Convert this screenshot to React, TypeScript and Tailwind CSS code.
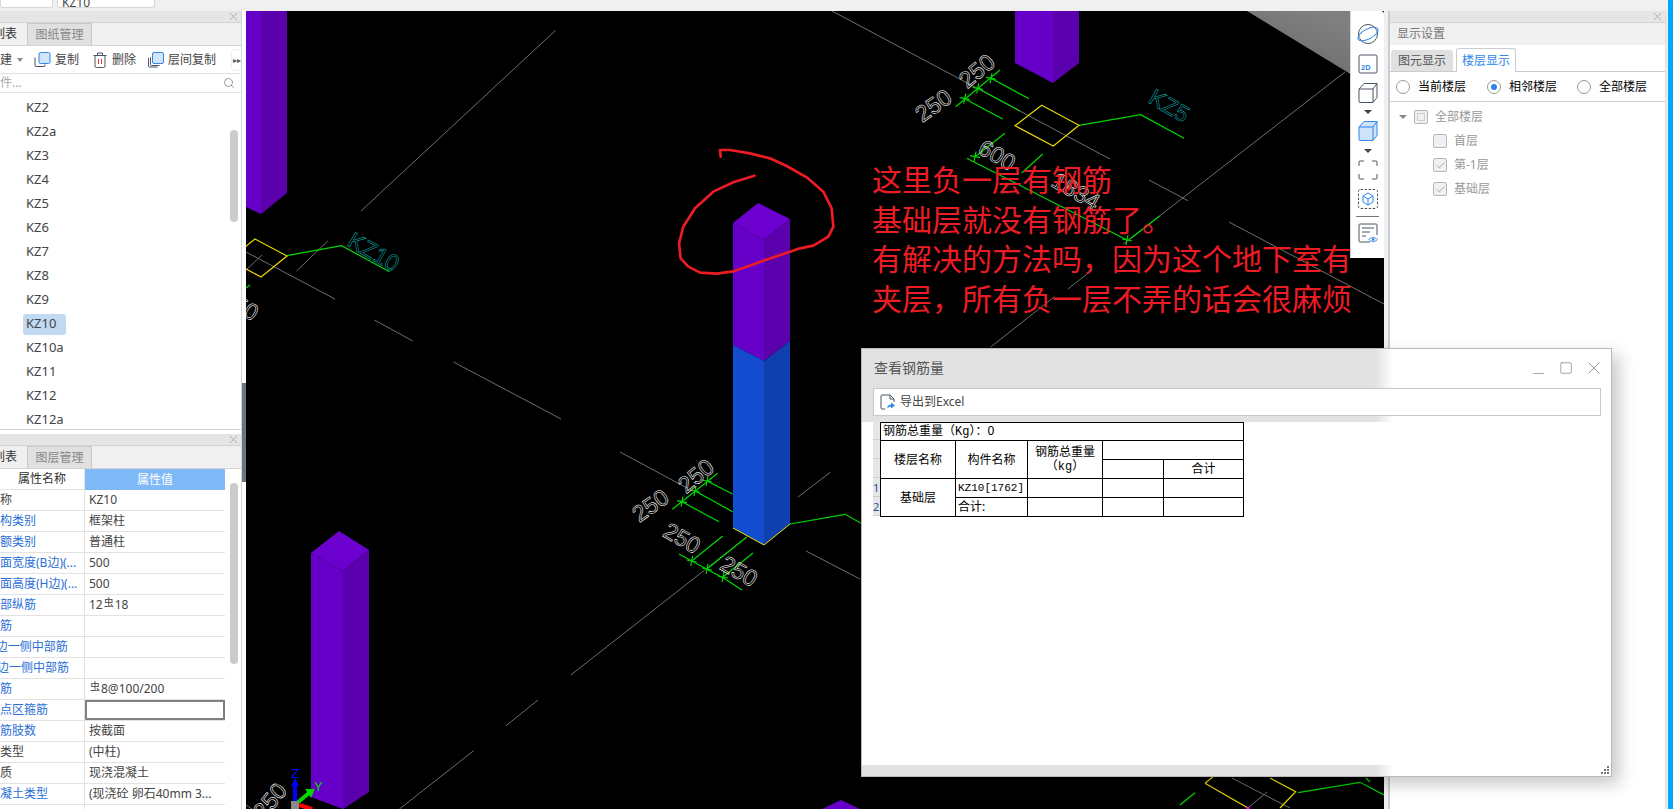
import React from "react";
import { Check, Search, X, Minus, Square } from "lucide-react";

const names = ["KZ2","KZ2a","KZ3","KZ4","KZ5","KZ6","KZ7","KZ8","KZ9","KZ10","KZ10a","KZ11","KZ12","KZ12a"];

const props: [string, React.ReactNode, boolean][] = [
  ["名称", "KZ10", false],
  ["结构类别", "框架柱", true],
  ["定额类别", "普通柱", true],
  ["截面宽度(B边)(...", "500", true],
  ["截面高度(H边)(...", "500", true],
  ["全部纵筋", <>12<Rebar />18</>, true],
  ["角筋", "", true],
  ["B边一侧中部筋", "", true],
  ["H边一侧中部筋", "", true],
  ["箍筋", <><Rebar />8@100/200</>, true],
  ["节点区箍筋", "", true],
  ["箍筋肢数", "按截面", true],
  ["柱类型", "(中柱)", false],
  ["材质", "现浇混凝土", false],
  ["混凝土类型", "(现浇砼 卵石40mm 3...", true],
  ["", "", false],
];

function Rebar() {
  return <span className="relative -top-[3px] mx-[1px] text-[10px]">虫</span>;
}

function PanelStrip() {
  return (
    <div className="flex h-[12px] shrink-0 items-center justify-end border-b border-[#d4d4d4] bg-[#e5e5e5] pr-[1px]">
      <X size={13} strokeWidth={1.300} className="shrink-0 text-[#9a9a9a]" />
    </div>
  );
}

function Tabs({ first, second }: { first: string; second: string }) {
  return (
    <div className="flex h-[23px] shrink-0 border-b border-[#d4d4d4] bg-[#f0f0f0] text-[12px]">
      <div className="flex w-[27px] items-center overflow-hidden bg-[#f0f0f0] text-[#333]">
        <span className="-ml-[7px] whitespace-nowrap">{first}</span>
      </div>
      <div className="flex w-[65px] items-center justify-center border border-b-0 border-[#c9c9c9] bg-[#e0e0e0] text-[#888]">{second}</div>
    </div>
  );
}

function CopyIcon({ layered }: { layered?: boolean }) {
  return (
    <svg width="17" height="16" viewBox="0 0 17 16" fill="none">
      {layered && <path d="M1.500 6v8a1 1 0 0 0 1 1h8" stroke="#4a5565" strokeWidth="1" />}
      <path d={layered ? "M3.500 5v7.500a1 1 0 0 0 1 1h8" : "M1 5.500v8a1 1 0 0 0 1 1h8a1 1 0 0 0 1-1v-1"} stroke="#4a5565" strokeWidth="1" />
      <rect x={layered ? 5.5 : 5} y="0.5" width="11" height="11" rx="1.500" fill="#d3e5fb" stroke="#2f87e8" />
    </svg>
  );
}

function TrashIcon() {
  return (
    <svg width="14" height="16" viewBox="0 0 14 16" fill="none" stroke="#4a5565">
      <path d="M0.500 3.500h13M4.500 3.500v-2.500h5v2.500M2 3.500v10.500a1.500 1.500 0 0 0 1.500 1.500h7a1.500 1.500 0 0 0 1.500-1.500v-10.500" />
      <path d="M5.500 7v5M8.500 7v5" stroke="#e53935" />
    </svg>
  );
}

function Radio({ on, label, w }: { on?: boolean; label: string; w: string }) {
  return (
    <div className={`flex items-center ${w}`}>
      <span className="flex h-[14px] w-[14px] items-center justify-center rounded-full border border-[#999] bg-white">
        {on && <span className="h-[6px] w-[6px] rounded-full bg-[#2f7fe8]" />}
      </span>
      <span className="ml-[8px] text-black">{label}</span>
    </div>
  );
}

function Box({ checked, partial }: { checked?: boolean; partial?: boolean }) {
  return (
    <span className="flex h-[14px] w-[14px] items-center justify-center rounded-[2px] border border-[#b5b5b5] bg-[#f0f0f0]">
      {checked && <Check size={11} strokeWidth={2} className="text-[#a8a8a8]" />}
      {partial && <span className="h-[8px] w-[8px] border border-[#cfcfcf]" />}
    </span>
  );
}

function LeftPanel() {
  return (
    <div className="relative flex w-[246px] shrink-0 bg-white">
      <div className="flex w-[242px] flex-col border-r border-[#d4d4d4]">
        <PanelStrip />
        <Tabs first="列表" second="图纸管理" />
        <div className="flex h-[28px] shrink-0 items-center overflow-hidden whitespace-nowrap border-b border-[#e2e2e2] text-[12px] text-[#444]">
          <div className="flex w-[12px] shrink-0 justify-end overflow-hidden">建</div>
          <span className="ml-[5px] h-0 w-0 shrink-0 border-x-[3px] border-t-[4px] border-x-transparent border-t-[#888]" />
          <span className="ml-[11px] shrink-0"><CopyIcon /></span>
          <span className="ml-[4px] shrink-0">复制</span>
          <span className="ml-[14px] shrink-0"><TrashIcon /></span>
          <span className="ml-[5px] shrink-0">删除</span>
          <span className="ml-[11px] shrink-0"><CopyIcon layered /></span>
          <span className="ml-[4px] shrink-0">层间复制</span>
          <span className="ml-[15px] flex h-[22px] w-[11px] shrink-0 items-center justify-center rounded-[3px] border border-[#eee] text-[8px] text-[#555]">▸▸</span>
        </div>
        <div className="flex h-[19px] shrink-0 items-center justify-between border-b border-[#e2e2e2] pr-[6px] text-[12px] text-[#aaa]">
          <span>件...</span>
          <Search size={12} className="text-[#999]" />
        </div>
        <div className="relative h-[337px] shrink-0 overflow-hidden border-b border-[#d4d4d4] pt-[3px] text-[13px] text-[#444]">
          {names.map((n) => (
            <div key={n} className="flex h-[24px] items-center pl-[23px]">
              <span className={`flex h-[21px] items-center px-[3px] ${n === "KZ10" ? "w-[43px] rounded-[3px] bg-[#c2d9f2]" : ""}`}>{n}</span>
            </div>
          ))}
          <div className="absolute left-[230px] top-[37px] h-[92px] w-[8px] rounded-[4px] bg-[#cbcbcb]" />
        </div>
        <div className="h-[4px] shrink-0" />
        <PanelStrip />
        <Tabs first="列表" second="图层管理" />
        <div className="relative flex-1 overflow-hidden text-[12px]">
          <div className="flex h-[21px] w-[225px]">
            <div className="flex w-[85px] items-center justify-center border-b border-r border-[#e2e2e2] text-[#333]">属性名称</div>
            <div className="flex w-[140px] items-center justify-center bg-[#7fb9f8] text-white">属性值</div>
          </div>
          {props.map(([label, value, blue], i) => (
            <div key={i} className="flex h-[21px] w-[225px] border-b border-[#e2e2e2]">
              <div className="flex w-[85px] items-center overflow-hidden border-r border-[#e2e2e2]">
                <span className={`-ml-[12px] whitespace-nowrap ${blue ? "text-[#2a6fd6]" : "text-[#444]"}`}>{label}</span>
              </div>
              {label === "节点区箍筋" ? (
                <div className="w-[140px] border-2 border-[#808080]" />
              ) : (
                <div className="flex w-[140px] items-center whitespace-nowrap pl-[4px] text-[#444]">{value}</div>
              )}
            </div>
          ))}
          <div className="absolute left-[230px] top-[14px] h-[181px] w-[8px] rounded-[4px] bg-[#cbcbcb]" />
        </div>
      </div>
      <div className="absolute left-[242px] top-[372px] h-[99px] w-[4px] bg-[#6c7480]" />
    </div>
  );
}

const purple = { top: "#6b00cf", left: "#6600c8", right: "#5b00ad" };
const gray = "#6e6e6e";
const green = "#00d800";

function Dim({ x, y, r, t }: { x: number; y: number; r: number; t: string }) {
  return (
    <text
      transform={`translate(${x} ${y}) rotate(${r})`}
      fill="none"
      stroke="#ffffff"
      strokeWidth="0.550"
      fontFamily="Liberation Sans, sans-serif"
      fontSize="23"
      textAnchor="middle"
    >
      {t}
    </text>
  );
}

function Tick({ x, y }: { x: number; y: number }) {
  return <path d={`M${x - 5} ${y - 1}L${x + 5} ${y + 1}M${x + 1} ${y - 5}L${x - 1} ${y + 5}`} stroke={green} strokeWidth="1.200" />;
}

function Label({ x, y, t }: { x: number; y: number; t: string }) {
  return (
    <text transform={`translate(${x} ${y}) rotate(30)`} fontSize="23" fontFamily="Liberation Sans, sans-serif" fill="none" stroke="#0a9a9a" strokeWidth="0.600">{t}</text>
  );
}

function Scene() {
  const grayLines = [
    "M555.500 30.400L361 211", "M327.800 241L296.500 271",
    "M246 252L335 299", "M374.400 320L412.800 341", "M453.500 362L561 419", "M620 452L687 488", "M806 551L860 579",
    "M262 255L246 270", "M798 497L830.700 472", "M746.700 537L570.800 675", "M538 700L506 725.700", "M473.700 750.700L399.400 809",
    "M832 11L1110 159", "M1149 180L1188 200.700", "M1229 222L1384 304",
    "M1345 72L1123.400 244", "M1092 270L1068 289", "M1054.500 296.700L990.700 347",
    "M1231.700 778L1290 808", "M1267 792L1248 808", "M246 805L252 809",
  ];
  const greenLines = [
    "M286.700 255.700L341.600 245.700L389.500 271.700", "M250 285L246 288",
    "M717.700 473.300L672.300 509.300", "M707 481L732.700 494", "M695 491L732.700 511.700", "M682 501.700L719 521.700",
    "M679 554L726.700 580", "M691.700 561L722.700 536", "M707 569L746.700 537", "M723 577L753 553", "M726.700 580L742 590",
    "M790 524L845 514.300L860.700 523",
    "M1000 70L955.700 106.700", "M991 78.300L1029 98.700", "M977.700 88.300L1020 111", "M964.700 98.700L1002.700 119",
    "M1079 125.300L1140.700 114.700L1184 138.300",
    "M966.700 158.300L1127 240", "M1005 133.300L975 156.700", "M1042.700 154L1021.700 173", "M1159.700 216L1128.600 240",
    "M1298 792.700L1360 782.300L1384 795", "M1195 792.700L1180 805", "M1366 778L1370 782",
  ];
  const ticks = [[707,481],[695,491],[682,501.7],[691.7,561],[707,569],[723,577],[991,78.3],[977.7,88.3],[964.7,98.7],[975,156.7],[1127,240]];
  return (
    <svg className="absolute inset-0 h-full w-full" viewBox="246 11 1138 798" fill="none">
      <defs>
        <linearGradient id="corner" x1="0" y1="1" x2="0.600" y2="0">
          <stop offset="0" stopColor="#666" />
          <stop offset="1" stopColor="#808080" />
        </linearGradient>
      </defs>
      <polygon points="1247,11 1352,75 1352,11" fill="url(#corner)" />
      {grayLines.map((d) => <path key={d} d={d} stroke={gray} strokeWidth="1" />)}
      {greenLines.map((d) => <path key={d} d={d} stroke={green} strokeWidth="1.200" />)}
      {ticks.map(([x, y]) => <Tick key={`${x}-${y}`} x={x} y={y} />)}

      <path d="M255 239L287 256L261 277L229 260Z M1041.700 105.300L1079 125.300L1053.300 146L1015 125.700Z" stroke="#e6d800" strokeWidth="1.200" />
      <path d="M1205 783.300L1212.700 777M1270 778L1295.700 791.700L1280 808M1205 783.300L1248 808" stroke="#e6d800" strokeWidth="1.200" />
      <circle cx="1248" cy="808" r="1.500" fill="#ff00ff" />

      <polygon points="246,11 261,11 261,214 246,207" fill={purple.left} />
      <polygon points="261,11 287,11 287,193 261,214" fill={purple.right} />
      <polygon points="1015,11 1053,11 1053,83 1015,63" fill={purple.left} />
      <polygon points="1053,11 1079,11 1079,63 1053,83" fill={purple.right} />
      <polygon points="733,223 758,203 790,219 764,240" fill={purple.top} />
      <polygon points="733,223 764,240 764,361 733,345" fill={purple.left} />
      <polygon points="764,240 790,219 790,341 764,361" fill={purple.right} />
      <polygon points="733,345 764,361 764,545 733,528" fill="#134cce" />
      <polygon points="764,361 790,341 790,524 764,545" fill="#1040b0" />
      <path d="M733 528L764 545L790 524" stroke="#f0e000" strokeWidth="1" />
      <polygon points="311,553 339,531 369,550 343,571" fill={purple.top} />
      <polygon points="311,553 343,571 343,809 311,797" fill={purple.left} />
      <polygon points="343,571 369,550 369,792 343,809" fill={purple.right} />
      <polygon points="841,800 860,809 822,809" fill={purple.left} />

      <Dim x={701} y={482} r={-40} t="250" />
      <Dim x={655} y={512} r={-35} t="250" />
      <Dim x={678} y={545} r={30} t="250" />
      <Dim x={735} y={578} r={30} t="250" />
      <Dim x={982} y={77} r={-40} t="250" />
      <Dim x={938} y={112} r={-35} t="250" />
      <Dim x={993} y={162} r={30} t="600" />
      <Dim x={1072} y={198} r={30} t="1834" />
      <Dim x={236} y={312} r={30} t="250" />
      <Dim x={276} y={806} r={-50} t="250" />

      <Label x={346} y={245} t="KZ10" />
      <Label x={1147} y={102} t="KZ5" />
      <Label x={862} y={530} t="KZ" />

      <g transform="translate(620 130) scale(0.33333)">
        <polyline
          points="302,80 300,60 330,60 390,70 450,85 500,108 560,142 610,185 635,235 640,290 625,320 580,347 540,355 490,372 430,392 380,410 340,424 290,431 240,428 205,410 182,385 177,340 190,290 225,235 280,185 340,157 403,137"
          stroke="#ed1c24"
          strokeWidth="8"
          strokeLinejoin="round"
          strokeLinecap="round"
        />
      </g>

      <path d="M295 805V784" stroke="#0000ff" strokeWidth="4" />
      <path d="M291 786L295 778L299 786Z" fill="#0000ff" />
      <path d="M297 803L309 793" stroke="#00d800" strokeWidth="4" />
      <path d="M305 789L315 789L311 798Z" fill="#00d800" />
      <path d="M299 805L312 809" stroke="#ff0000" strokeWidth="4" />
      <rect x="291" y="801" width="8" height="8" fill="#8a8a8a" />
      <text x="291" y="778" fontSize="13" fill="#0000ff" fontFamily="Liberation Sans, sans-serif">Z</text>
      <text x="314" y="791" fontSize="13" fill="#00d800" fontFamily="Liberation Sans, sans-serif">Y</text>
    </svg>
  );
}

function ToolRail() {
  const s = "#4a5565";
  const b = "#2f87e8";
  return (
    <div className="absolute right-0 top-0 flex h-[247px] w-[34px] flex-col items-center rounded-tr-[3px] border-l border-[#d8d8d8] bg-white pt-[12px]">
      <svg width="22" height="22" viewBox="0 0 22 22" fill="none">
        <circle cx="11" cy="11" r="9.500" stroke={s} />
        <ellipse cx="11" cy="11" rx="11" ry="5" transform="rotate(-28 11 11)" stroke={b} />
      </svg>
      <svg className="mt-[9px]" width="20" height="20" viewBox="0 0 20 20" fill="none">
        <rect x="1" y="1" width="18" height="18" rx="1.500" stroke={s} />
        <text x="3" y="16" fontSize="7.500" fontWeight="700" fill={b} fontFamily="Liberation Sans, sans-serif">2D</text>
      </svg>
      <svg className="mt-[8px]" width="20" height="22" viewBox="0 0 20 22" fill="none" stroke={s}>
        <path d="M1 7L6 1.500H19V15.500L15 20.500H2a1 1 0 0 1-1-1ZM1 7H15V20.500M15 7L19 1.500" />
      </svg>
      <span className="mt-[6px] h-0 w-0 border-x-[4px] border-t-[4px] border-x-transparent border-t-[#444]" />
      <svg className="mt-[6px]" width="20" height="22" viewBox="0 0 20 22" fill="none" stroke={b}>
        <path d="M1 7L6 1.500H19V15.500L15 20.500H2a1 1 0 0 1-1-1Z" fill="#cfe2fb" />
        <path d="M1 7H15V20.500M15 7L19 1.500" />
      </svg>
      <span className="mt-[7px] h-0 w-0 border-x-[4px] border-t-[4px] border-x-transparent border-t-[#444]" />
      <svg className="mt-[7px]" width="20" height="20" viewBox="0 0 20 20" fill="none" stroke={s}>
        <path d="M1 6V2a1 1 0 0 1 1-1H6M14 1H18a1 1 0 0 1 1 1V6M19 14V18a1 1 0 0 1-1 1H14M6 19H2a1 1 0 0 1-1-1V14" />
      </svg>
      <svg className="mt-[9px]" width="20" height="20" viewBox="0 0 20 20" fill="none">
        <rect x="0.500" y="0.500" width="19" height="19" rx="2" stroke={s} strokeDasharray="2.500 1.500" />
        <path d="M10 4L15 7V13L10 16L5 13V7ZM5 7L10 10L15 7M10 10V16" stroke={b} />
      </svg>
      <div className="mt-[7px] h-px w-[23px] bg-[#777]" />
      <svg className="mt-[6px]" width="20" height="20" viewBox="0 0 20 20" fill="none" stroke={s}>
        <path d="M12 19H2a1 1 0 0 1-1-1V2a1 1 0 0 1 1-1H18a1 1 0 0 1 1 1V12" />
        <path d="M4 5H16M4 9H12M4 13H8" />
        <path d="M11 16.500C12.500 14 17.500 14 19.500 16.500C17.500 19 12.500 19 11 16.500Z" stroke={b} fill="white" />
        <circle cx="15.200" cy="16.500" r="1.300" fill={b} stroke="none" />
      </svg>
    </div>
  );
}

function RightPanel() {
  return (
    <div className="flex w-[284px] shrink-0 bg-[#f0f0f0] pl-[4px]">
      <div className="flex w-[279px] flex-col border-x-2 border-x-[#c9cdd2] border-r-[#e4e4e4] bg-white text-[12px]">
        <PanelStrip />
        <div className="flex h-[22px] shrink-0 items-center bg-[#f0f0f0] pl-[7px] text-[#777]">显示设置</div>
        <div className="flex h-[27px] shrink-0 items-end border-b border-[#c9cdd2] pl-[1px]">
          <div className="flex h-[21px] w-[62px] items-center justify-center rounded-t-[3px] bg-[#e0e0e0] text-[#555]">图元显示</div>
          <div className="relative top-px ml-[3px] flex h-[24px] w-[60px] items-center justify-center rounded-t-[3px] border border-b-0 border-[#c9cdd2] bg-white text-[#2f87e8]">楼层显示</div>
        </div>
        <div className="flex h-[30px] shrink-0 items-center border-b border-[#c9cdd2] pl-[6px]">
          <Radio label="当前楼层" w="w-[91px]" />
          <Radio on label="相邻楼层" w="w-[90px]" />
          <Radio label="全部楼层" w="" />
        </div>
        <div className="flex flex-col pt-[3px] text-[#999]">
          <div className="flex h-[24px] items-center pl-[9px]">
            <span className="h-0 w-0 border-x-[4px] border-t-[4px] border-x-transparent border-t-[#888]" />
            <span className="ml-[7px]"><Box partial /></span>
            <span className="ml-[7px]">全部楼层</span>
          </div>
          {[["首层", false], ["第-1层", true], ["基础层", true]].map(([t, c]) => (
            <div key={t as string} className="flex h-[24px] items-center pl-[43px]">
              <Box checked={c as boolean} />
              <span className="ml-[7px]">{t as string}</span>
            </div>
          ))}
        </div>
      </div>
    </div>
  );
}

const cell = "border border-black p-0 text-center align-middle";

function Dialog() {
  return (
    <div className="absolute left-[861px] top-[348px] flex h-[429px] w-[751px] flex-col border border-[#b9b9b9] bg-[linear-gradient(90deg,#e2e2e2_68.500%,#ffffff_71%)] shadow-[7px_7px_16px_rgba(0,0,0,0.22)]">
      <div className="flex h-[39px] shrink-0 items-start justify-between pl-[12px] pr-[3px] pt-[9px]">
        <span className="text-[14px] leading-[20px] text-[#555]">查看钢筋量</span>
        <div className="flex items-center text-[#777]">
          <span className="flex h-[20px] w-[28px] items-center justify-center"><Minus size={17} strokeWidth={0.900} className="relative top-[5px]" /></span>
          <span className="flex h-[20px] w-[28px] items-center justify-center"><Square size={14} strokeWidth={1.100} /></span>
          <span className="flex h-[20px] w-[28px] items-center justify-center"><X size={20} strokeWidth={0.900} /></span>
        </div>
      </div>
      <div className="ml-[11px] flex h-[28px] w-[728px] shrink-0 items-center border border-[#c5c8cc] bg-white pl-[6px] text-[12px] text-[#444]">
        <svg width="16" height="16" viewBox="0 0 16 16" fill="none">
          <path d="M5 15H2a1 1 0 0 1-1-1V2a1 1 0 0 1 1-1H10L14 5V8M10 1V5H14" stroke="#4a5565" />
          <path d="M7 14.500C7.500 12 9 10.500 11 10.500V8.500L15 11.500L11 14.500V12.500C9.500 12.500 8 13.500 7 14.500Z" fill="#2f87e8" />
        </svg>
        <span className="ml-[4px]">导出到Excel</span>
      </div>
      <div className="mt-[6px] flex min-h-0 flex-1 bg-white pl-[11px]">
        <div className="w-[7px] shrink-0 overflow-hidden text-[11px] leading-[19px] text-[#1f4e9a]">
          <div className="h-[18px] border-b border-[#cfcfcf] bg-[#e6e6e6]" />
          <div className="h-[19px] border-b border-[#cfcfcf] bg-[#e6e6e6]" />
          <div className="h-[19px] border-b border-[#cfcfcf] bg-[#e6e6e6]" />
          <div className="h-[19px] border-b border-[#cfcfcf] bg-[#e6e6e6]">1</div>
          <div className="h-[19px] border-b border-[#cfcfcf] bg-[#e6e6e6]">2</div>
        </div>
        <table className="h-[94px] w-[363px] table-fixed border-collapse self-start text-[12px] leading-[14px] text-black">
          <colgroup>
            <col className="w-[75px]" />
            <col className="w-[72px]" />
            <col className="w-[75px]" />
            <col className="w-[61px]" />
            <col className="w-[80px]" />
          </colgroup>
          <tbody>
            <tr className="h-[18px]">
              <td colSpan={5} className="border border-black p-0 pl-[2px] text-left align-middle">钢筋总重量（<span className="font-['Liberation_Mono',monospace]">Kg</span>）：0</td>
            </tr>
            <tr className="h-[19px]">
              <td rowSpan={2} className={cell}>楼层名称</td>
              <td rowSpan={2} className={cell}>构件名称</td>
              <td rowSpan={2} className={cell}>钢筋总重量<br />（<span className="font-['Liberation_Mono',monospace]">kg</span>）</td>
              <td colSpan={2} className={cell} />
            </tr>
            <tr className="h-[19px]">
              <td className={cell} />
              <td className={cell}>合计</td>
            </tr>
            <tr className="h-[19px]">
              <td rowSpan={2} className={cell}>基础层</td>
              <td className="border border-black p-0 pl-[2px] text-left align-middle font-['Liberation_Mono','Noto_Sans_CJK_SC',monospace] text-[11px]">KZ10[1762]</td>
              <td className={cell} />
              <td className={cell} />
              <td className={cell} />
            </tr>
            <tr className="h-[19px]">
              <td className="border border-black p-0 pl-[2px] text-left align-middle">合计:</td>
              <td className={cell} />
              <td className={cell} />
              <td className={cell} />
            </tr>
          </tbody>
        </table>
      </div>
      <div className="relative h-[11px] shrink-0">
        <svg className="absolute bottom-[1px] right-[1px]" width="9" height="9" viewBox="0 0 9 9" fill="#777">
          <rect x="6" y="0" width="2" height="2" /><rect x="3" y="3" width="2" height="2" /><rect x="6" y="3" width="2" height="2" />
          <rect x="0" y="6" width="2" height="2" /><rect x="3" y="6" width="2" height="2" /><rect x="6" y="6" width="2" height="2" />
        </svg>
      </div>
    </div>
  );
}

export default function App() {
  return (
    <div className="relative flex h-[809px] w-[1673px] overflow-hidden bg-[#f0f0f0] font-['Noto_Sans','Noto_Sans_CJK_SC',sans-serif]">
      <div className="flex w-[1668px] flex-col">
        <div className="flex h-[11px] shrink-0 items-start gap-[4px] overflow-hidden">
          <div className="h-[8px] w-[53px] rounded-b-[3px] border border-t-0 border-[#d8d8d8] bg-white" />
          <div className="flex h-[8px] w-[98px] items-end rounded-b-[3px] border border-t-0 border-[#d8d8d8] bg-white pl-[4px] text-[12px] leading-[8px] text-[#444]">KZ10</div>
        </div>
        <div className="flex min-h-0 flex-1">
          <LeftPanel />
          <div className="relative w-[1138px] shrink-0 overflow-hidden bg-black">
            <Scene />
            <ToolRail />
            <div className="absolute left-[626px] top-[149px] whitespace-nowrap text-[30px] leading-[39.500px] text-[#ed1c24]">
              <div>这里负一层有钢筋</div>
              <div>基础层就没有钢筋了。</div>
              <div>有解决的方法吗，因为这个地下室有</div>
              <div>夹层，所有负一层不弄的话会很麻烦</div>
            </div>
          </div>
          <RightPanel />
        </div>
      </div>
      <div className="w-[5px] bg-[#00a8ff]" />
      <Dialog />
    </div>
  );
}
